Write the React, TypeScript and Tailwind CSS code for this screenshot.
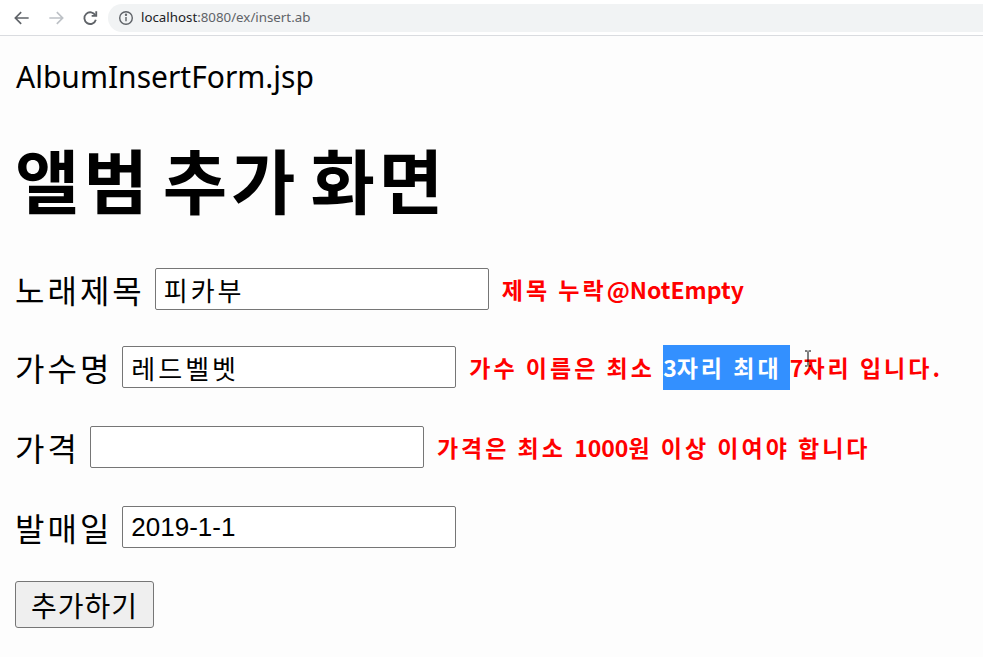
import React from 'react';

const kr = "font-['Noto_Sans_CJK_KR','Noto_Sans',sans-serif]";

const BrowserBar: React.FC = () => (
  <div className="flex items-center h-[36px] border-b border-[#dadce0] bg-white">
    <div className="flex items-center gap-[14px] pl-[12px] pr-[8px]">
      <svg width="20" height="20" viewBox="0 0 24 24" fill="none" stroke="#5f6368" strokeWidth="2">
        <path d="M20 12H5M11 5l-7 7 7 7" />
      </svg>
      <svg width="20" height="20" viewBox="0 0 24 24" fill="none" stroke="#bdc1c6" strokeWidth="2">
        <path d="M4 12h15M13 5l7 7-7 7" />
      </svg>
      <svg width="20" height="20" viewBox="0 0 24 24" fill="none" stroke="#5f6368" strokeWidth="2.2">
        <path d="M18.5 9A7 7 0 1 0 19 14" />
        <path d="M19.5 4v5.5H14" />
      </svg>
    </div>
    <div className="flex items-center flex-1 h-[28px] rounded-l-full bg-[#f1f3f4] pl-[10px]">
      <svg width="16" height="16" viewBox="0 0 16 16" fill="none" stroke="#5f6368" strokeWidth="1.4">
        <circle cx="8" cy="8" r="6.3" />
        <path d="M8 7v4.2" />
        <circle cx="8" cy="4.8" r="0.5" fill="#5f6368" />
      </svg>
      <span className="ml-[7px] text-[13.3px] font-['Noto_Sans',sans-serif] text-[#202124]">
        localhost<span className="text-[#5f6368]">:8080/ex/insert.ab</span>
      </span>
    </div>
  </div>
);

type FieldProps = {
  label: string;
  value?: string;
  spaced?: boolean;
  className?: string;
  children?: React.ReactNode;
};

const Field: React.FC<FieldProps> = ({ label, value, spaced, className, children }) => (
  <div className={`relative flex items-center h-[42px] ${className ?? ''}`}>
    <span className="text-[32px] tracking-[3px] text-black leading-none">{label}</span>
    <input
      readOnly
      value={value ?? ''}
      className={`ml-[10px] w-[334px] h-[42px] shrink-0 border border-[#767676] rounded-[2px] px-[8px] text-[26px] font-['Liberation_Sans','Noto_Sans_CJK_KR',sans-serif] text-black outline-none bg-white ${spaced ? 'tracking-[3px]' : ''}`}
    />
    {children}
  </div>
);

const Err: React.FC<{ children: React.ReactNode }> = ({ children }) => (
  <span className="ml-[13px] text-[23px] font-bold tracking-[3px] text-[#ff0000] whitespace-nowrap leading-none">
    {children}
  </span>
);

const App: React.FC = () => {
  return (
    <div className={`w-[983px] h-[657px] overflow-hidden bg-[#fdfdfd] ${kr}`}>
      <BrowserBar />
      <main className="px-[15px]">
        <div className="flex items-center h-[80px] pl-[1px] text-[30px] font-['Noto_Sans',sans-serif] text-black">
          AlbumInsertForm.jsp
        </div>
        <h1 className="flex items-center h-[126px] text-[70px] font-bold tracking-[4px] [word-spacing:-9px] text-black leading-none">
          앨범 추가 화면
        </h1>
        <Field label="노래제목" value="피카부" spaced className="mt-[26px]">
          <Err>
            제목 누락<span className="tracking-normal">@NotEmpty</span>
          </Err>
        </Field>
        <Field label="가수명" value="레드벨벳" spaced className="mt-[36px]">
          <span className="ml-[13px] flex items-center text-[23px] font-bold tracking-[3px] text-[#ff0000] whitespace-nowrap leading-none">
            가수 이름은 최소&nbsp;
            <span className="flex items-center h-[45px] bg-[#3390ff] text-white">
              <span className="tracking-normal">3</span>자리 최대&nbsp;
            </span>
            <span className="tracking-normal">7</span>자리 입니다.
          </span>
          <svg className="absolute left-[789px] top-[4px]" width="8" height="17" viewBox="0 0 8 17" fill="none" stroke="#000" strokeWidth="1">
            <path d="M1 1h2.5M4.5 1H7M4 1.5v14M1 16h2.5M4.5 16H7" />
          </svg>
        </Field>
        <Field label="가격" className="mt-[38px]">
          <Err>
            가격은 최소 <span className="tracking-normal">1000</span>원 이상 이여야 합니다
          </Err>
        </Field>
        <Field label="발매일" value="2019-1-1" className="mt-[38px]" />
        <button className="mt-[33px] h-[47px] w-[139px] border border-[#767676] rounded-[3px] bg-[#efefef] text-[28px] tracking-[1px] text-black">
          추가하기
        </button>
      </main>
    </div>
  );
};

export default App;
